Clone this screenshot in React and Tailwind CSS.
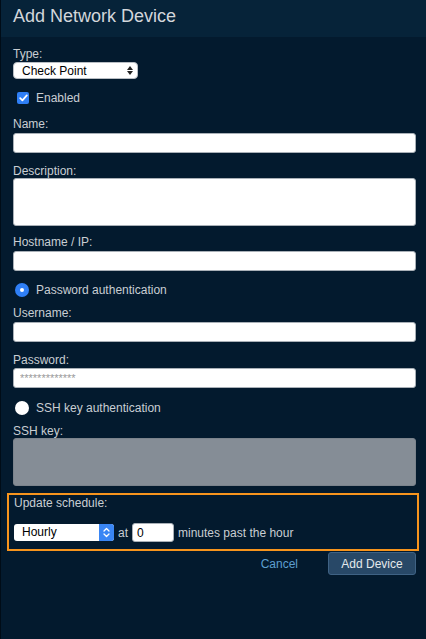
import React from 'react';

const font = { fontFamily: '"Liberation Sans", Arial, sans-serif' };

function Label({ children, className = '' }) {
  return <div className={`text-[12px] leading-[14px] text-[#c9ced3] ${className}`}>{children}</div>;
}

function TextInput({ className = '', placeholder }) {
  return (
    <input
      readOnly
      placeholder={placeholder}
      className={`block w-full h-[20px] bg-white rounded-[3px] border border-[#a9b0b7] px-[6px] text-[11px] text-black placeholder:text-[#9a9a9a] outline-none ${className}`}
    />
  );
}

function Radio({ checked, label, className = '' }) {
  return (
    <div className={`flex items-center h-[14px] ${className}`}>
      {checked ? (
        <span className="ml-[2px] w-[14px] h-[14px] rounded-full bg-[#2f7ff6] flex items-center justify-center">
          <span className="w-[4px] h-[4px] rounded-full bg-white" />
        </span>
      ) : (
        <span className="ml-[2px] w-[14px] h-[14px] rounded-full bg-white" />
      )}
      <span className="ml-[7px] text-[12px] leading-[14px] text-[#c9ced3]">{label}</span>
    </div>
  );
}

export default function App() {
  return (
    <div style={font} className="w-[426px] h-[639px] bg-[#031a2e] border-l border-[#000c17] overflow-hidden">
      {/* Header */}
      <div className="h-[37px] bg-[#062339] pl-[12px] pt-[6px]">
        <h1 className="text-[18px] leading-[20px] text-[#d3d7db] font-normal">Add Network Device</h1>
      </div>

      {/* Form */}
      <div className="pl-[12px] pr-[10px]">
        <Label className="mt-[10px]">Type:</Label>
        <div className="mt-[1px] w-[125px] h-[17px] bg-white rounded-[4px] border border-[#b9bec4] flex items-center pl-[8px] pr-[4px]">
          <span className="flex-1 text-[12px] leading-[14px] text-black">Check Point</span>
          <span className="flex flex-col items-center leading-none text-black">
            <svg width="6" height="4" viewBox="0 0 6 4"><path d="M3 0L6 4H0Z" fill="#222" /></svg>
            <svg width="6" height="4" viewBox="0 0 6 4" className="mt-[1px]"><path d="M0 0H6L3 4Z" fill="#222" /></svg>
          </span>
        </div>

        <div className="mt-[12px] h-[14px] flex items-center">
          <span className="ml-[4px] w-[12px] h-[12px] rounded-[2px] bg-[#2f7ff6] flex items-center justify-center">
            <svg width="9" height="8" viewBox="0 0 9 8"><path d="M1.2 4.2L3.4 6.4L7.8 1.4" stroke="white" strokeWidth="1.7" fill="none" strokeLinecap="round" strokeLinejoin="round" /></svg>
          </span>
          <span className="ml-[7px] text-[12px] leading-[14px] text-[#c9ced3]">Enabled</span>
        </div>

        <Label className="mt-[12px]">Name:</Label>
        <TextInput className="mt-[2px]" />

        <Label className="mt-[11px]">Description:</Label>
        <textarea readOnly className="block w-full h-[48px] mt-0 bg-white rounded-[3px] border border-[#a9b0b7] resize-none outline-none" />

        <Label className="mt-[9px]">Hostname / IP:</Label>
        <TextInput className="mt-[2px]" />

        <Radio checked label="Password authentication" className="mt-[12px]" />

        <Label className="mt-[9px]">Username:</Label>
        <TextInput className="mt-[2px]" />

        <Label className="mt-[11px]">Password:</Label>
        <TextInput className="mt-[1px]" placeholder="*************" />

        <Radio label="SSH key authentication" className="mt-[13px]" />

        <Label className="mt-[9px]">SSH key:</Label>
        <textarea readOnly disabled className="block w-full h-[48px] bg-[#858d96] rounded-[3px] border border-[#7b838c] resize-none outline-none" />

        {/* Update schedule */}
        <div className="mt-[7px] -ml-[6px] -mr-[3px] border-2 border-[#f7941d] pl-[5px] pt-[1px] pb-[7px]">
          <Label>Update schedule:</Label>
          <div className="mt-[13px] h-[19px] flex items-center">
            <div className="w-[100px] h-[17px] flex rounded-[3px] overflow-hidden bg-white">
              <span className="flex-1 pl-[8px] text-[12px] leading-[17px] text-black">Hourly</span>
              <span className="w-[15px] h-full bg-[#3a86f4] flex items-center justify-center">
                <svg width="7" height="11" viewBox="0 0 7 11">
                  <path d="M1 4L3.5 1.5L6 4M1 7L3.5 9.5L6 7" stroke="white" strokeWidth="1.3" fill="none" strokeLinecap="round" strokeLinejoin="round" />
                </svg>
              </span>
            </div>
            <span className="ml-[4px] text-[12px] leading-[14px] text-[#c9ced3]">at</span>
            <input readOnly value="0" className="ml-[4px] w-[42px] h-[19px] bg-white rounded-[3px] border border-[#a9b0b7] pl-[4px] text-[12px] text-black outline-none" />
            <span className="ml-[4px] text-[12px] leading-[14px] text-[#c9ced3]">minutes past the hour</span>
          </div>
        </div>

        {/* Actions */}
        <div className="mt-[1px] flex items-center justify-end">
          <button className="text-[12px] leading-[14px] text-[#5d9fcf] bg-transparent">Cancel</button>
          <button className="ml-[30px] w-[88px] h-[23px] bg-[#284867] border border-[#3f6284] rounded-[3px] text-[12px] text-[#e4e8ec]">
            Add Device
          </button>
        </div>
      </div>
    </div>
  );
}
